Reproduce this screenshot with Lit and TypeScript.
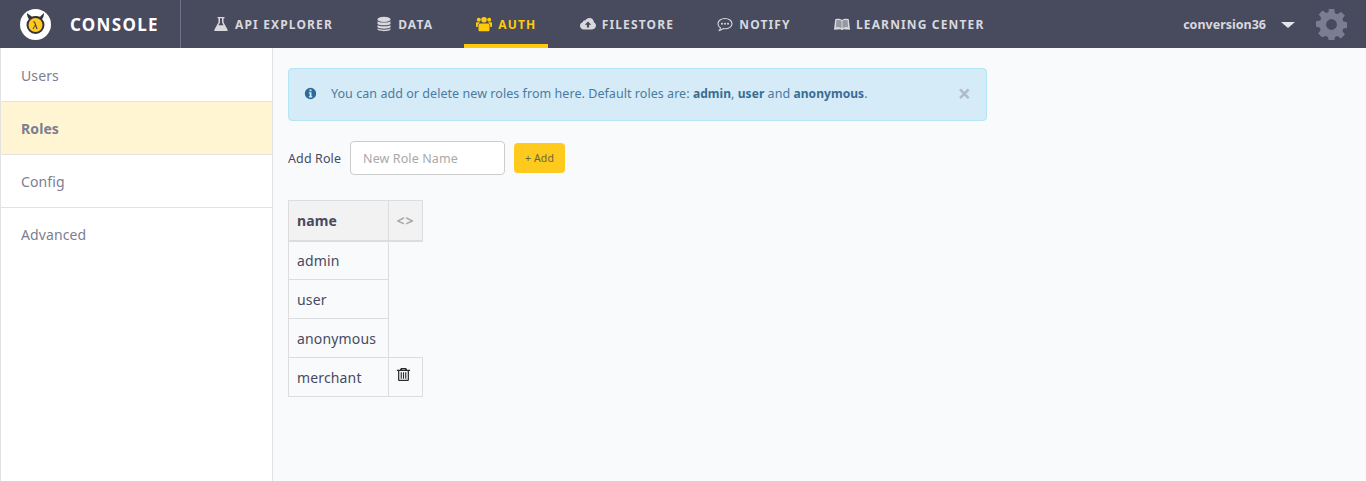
import { LitElement, css, html, svg } from "lit";
import { customElement } from "lit/decorators.js";

const icons = {
  flask: svg`<path fill-rule="evenodd" d="M4.500 1h7v1.300h-1v3.900l4 7.200c.5.900 0 1.600-.9 1.600H2.400c-.9 0-1.400-.7-.9-1.600l4-7.200V2.300h-1zM7 2.300v4.300L5.500 9.300h5L9 6.600V2.300z"/>`,
  database: svg`<ellipse cx="8" cy="3.400" rx="6.500" ry="2.600"/><path d="M1.500 5.200C2.500 7 13.500 7 14.500 5.200v2.600C13.500 9.800 2.500 9.800 1.500 7.800z"/><path d="M1.500 8.900C2.500 10.800 13.500 10.800 14.500 8.900v2.300C13.500 13.100 2.500 13.100 1.500 11.200z"/><path d="M1.500 12.300C2.500 14.200 13.500 14.200 14.500 12.300v1C14 15.800 2 15.800 1.500 13.300z"/>`,
  users: svg`<circle cx="8" cy="3.800" r="2.800"/><circle cx="2.800" cy="3.800" r="2"/><circle cx="13.200" cy="3.800" r="2"/><path d="M4.300 7.500h7.400c1.200 0 1.800 1 1.800 2.200v4.300c0 .8-.5 1.300-1.300 1.300H3.800c-.8 0-1.300-.5-1.300-1.300V9.700c0-1.200.6-2.200 1.800-2.200z"/><path d="M0 7.200C0 6.700.6 6.300 1.200 6.300h2.300c-.2.400 0 .8.300 1-1.300.3-2 1.400-2 2.900v.8H.8C.3 11 0 10.600 0 10.100z"/><path d="M16 7.200c0-.5-.6-.9-1.200-.9h-2.300c.2.400 0 .8-.3 1 1.300.3 2 1.400 2 2.900v.8h1c.5 0 .8-.4.800-.9z"/>`,
  cloud: svg`<path fill-rule="evenodd" d="M4 13.500C1.800 13.500 0 12 0 9.800 0 8 1.100 6.700 2.700 6.300 3 4.800 4.200 4 5.500 4.300 6.400 2.800 7.800 2 9.500 2c2.500 0 4.400 1.900 4.500 4.400 1.200.6 2 1.800 2 3.200 0 2.200-1.700 3.900-3.900 3.900zM8 5.500 4.800 8.700h2.100v2.900h2.200V8.700h2.100z"/>`,
  comment: svg`<path fill="none" stroke="currentColor" stroke-width="1.100" d="M8 2.500c3.900 0 7 2.300 7 5.200s-3.100 5.100-7 5.100c-.7 0-1.300 0-1.900-.2C5 13.600 3.800 14.200 2.300 14.500c.7-.8 1.100-1.700 1.100-2.700C1.900 10.900 1 9.400 1 7.700 1 4.800 4.100 2.500 8 2.500z"/><circle cx="5" cy="7.700" r="1"/><circle cx="8" cy="7.700" r="1"/><circle cx="11" cy="7.700" r="1"/>`,
  book: svg`<path fill-rule="evenodd" d="M0 13.800 1.200 3.300 2.200 3C4 2.500 6.500 2.700 8 4c1.500-1.300 4-1.500 5.800-1L14.800 3.300 16 13.800 9.500 13.300 8 14.200 6.500 13.300zM2.700 4.200 2.200 11.200c1.700-.4 3.500-.3 5.100.5V5.100C5.900 4 4.200 3.800 2.700 4.200zM13.300 4.200C11.800 3.800 10.100 4 8.700 5.100v6.600c1.600-.8 3.400-.9 5.100-.5z"/><path opacity=".55" d="M2.700 4.200 2.200 11.200c1.700-.4 3.500-.3 5.100.5V5.100C5.900 4 4.200 3.800 2.700 4.200zM13.300 4.200C11.800 3.800 10.100 4 8.700 5.100v6.600c1.600-.8 3.400-.9 5.100-.5z"/>`,
  info: svg`<path fill-rule="evenodd" d="M8 1a7 7 0 1 0 0 14A7 7 0 0 0 8 1zM6.800 3h2.400v2.200H6.800zM6 6.500h3.200v5H10.200V13H6V11.500h1V8H6z"/>`,
  trash: svg`<path fill-rule="evenodd" d="M5.200 1h5.600l1 2H15v1.300h-1.200v9.200c0 .9-.6 1.500-1.400 1.500H3.600c-.8 0-1.400-.6-1.400-1.500V4.300H1V3h3.200zM6.600 2.300l-.3.700h3.400l-.3-.7zM3.500 4.300v9.400h9V4.300zM5 5.700h1.200v6.700H5zM7.400 5.700h1.200v6.700H7.400zM9.800 5.700H11v6.700H9.800z"/>`,
  gear: svg`<path fill-rule="evenodd" d="M6.600 0h2.800l.4 2.200 1.300.5L12.900 1.400l2 2-1.300 1.800.5 1.300 2.200.4v2.800l-2.200.4-.5 1.300 1.300 1.800-2 2-1.800-1.300-1.300.5-.4 2.200H6.600l-.4-2.200-1.300-.5L3.100 14.600l-2-2 1.300-1.800-.5-1.300L0 9.100V6.300l2.200-.4.5-1.300L1.400 2.800l2-2 1.800 1.300 1.300-.5zM8 5.200a2.600 2.600 0 1 0 0 5.600 2.600 2.600 0 0 0 0-5.600z"/>`,
};

const nav = [
  { label: "API EXPLORER", icon: icons.flask },
  { label: "DATA", icon: icons.database },
  { label: "AUTH", icon: icons.users, active: true },
  { label: "FILESTORE", icon: icons.cloud },
  { label: "NOTIFY", icon: icons.comment },
  { label: "LEARNING CENTER", icon: icons.book },
];

const sideItems = ["Users", "Roles", "Config", "Advanced"];
const roles = ["admin", "user", "anonymous", "merchant"];

@customElement("app-root")
export class AppRoot extends LitElement {
  static styles = css`
    :host {
      display: block;
      height: 481px;
      overflow: hidden;
      background: #f9fafc;
      color: #484a5e;
      font-family: "Noto Sans", "Open Sans", sans-serif;
    }

    svg {
      display: block;
      fill: currentColor;
    }

    .header {
      display: flex;
      align-items: stretch;
      height: 48px;
      background: #484a5e;
    }

    .brand {
      display: flex;
      align-items: center;
      width: 181px;
      padding-left: 20px;
      box-sizing: border-box;
      border-right: 1px solid #6f7188;
      color: #fff;
    }

    .brand span {
      margin-left: 19px;
      font-size: 17px;
      font-weight: 700;
      letter-spacing: 1.3px;
    }

    .nav {
      display: flex;
      flex: 1;
      padding-left: 20px;
    }

    .nav-item {
      display: flex;
      align-items: center;
      gap: 6px;
      padding: 4px 12px 0;
      margin-right: 19.200px;
      box-sizing: border-box;
      border-bottom: 4px solid transparent;
      color: #d8d8dd;
      font-size: 12px;
      font-weight: 700;
      letter-spacing: 1.150px;
    }

    .nav-item.active {
      color: #ffca0a;
      border-bottom-color: #ffca0a;
    }

    .account {
      display: flex;
      align-items: center;
      padding-right: 19px;
      color: #d8d8dd;
      font-size: 12.500px;
      font-weight: 700;
    }

    .caret {
      width: 0;
      height: 0;
      margin: 2px 21px 0 15px;
      border-left: 7px solid transparent;
      border-right: 7px solid transparent;
      border-top: 6px solid #e6e6ea;
    }

    .gear {
      color: #7b7d93;
    }

    .body {
      display: flex;
      height: 433px;
    }

    .sidebar {
      width: 273px;
      box-sizing: border-box;
      padding-top: 1px;
      background: #fff;
      border-left: 1px solid #e2e2e2;
      border-right: 1px solid #e2e2e2;
      flex: none;
    }

    .side-item {
      display: flex;
      align-items: center;
      height: 53px;
      padding-left: 20px;
      box-sizing: border-box;
      border-bottom: 1px solid #e2e2e2;
      color: #7c7e92;
      font-size: 14px;
      letter-spacing: 0.1px;
    }

    .side-item.active {
      background: #fff5d2;
      font-weight: 700;
    }

    .side-item:last-child {
      border-bottom: none;
    }

    .main {
      flex: 1;
      padding: 20px 15px;
    }

    .alert {
      display: flex;
      align-items: center;
      width: 699px;
      height: 53px;
      box-sizing: border-box;
      padding: 0 15px 2px;
      background: #d5ebf8;
      border: 1px solid #b1e6f2;
      border-radius: 4px;
      color: #4a7ba0;
      font-size: 12.500px;
      letter-spacing: 0.05px;
    }

    .alert .info {
      color: #2d6a97;
      margin-right: 14px;
    }

    .alert b {
      color: #3a6d92;
      font-size: 12px;
    }

    .alert .text {
      flex: 1;
    }

    .close {
      color: #aebcc6;
      font-size: 23px;
      font-weight: 700;
      line-height: 1;
    }

    .form {
      display: flex;
      align-items: center;
      margin-top: 20px;
      font-size: 12.500px;
      letter-spacing: 0.1px;
    }

    .form label {
      margin-right: 9px;
      color: #484a5e;
    }

    .input {
      display: flex;
      align-items: center;
      width: 155px;
      height: 34px;
      box-sizing: border-box;
      padding-left: 12px;
      background: #fff;
      border: 1px solid #ccc;
      border-radius: 4px;
      color: #a9a9a9;
    }

    .add {
      display: flex;
      align-items: center;
      justify-content: center;
      width: 51px;
      height: 30px;
      margin-left: 9px;
      background: #ffca1e;
      border-radius: 4px;
      color: #6b6440;
      font-size: 10.500px;
    }

    table {
      margin-top: 25px;
      border-collapse: collapse;
      color: #484a5e;
      font-size: 14px;
      letter-spacing: 0.150px;
    }

    td,
    th {
      box-sizing: border-box;
      height: 39px;
      padding: 0 8px;
      border: 1px solid #ddd;
      text-align: left;
      font-weight: 400;
    }

    th {
      height: 40px;
      background: #f2f2f2;
      border-bottom-width: 2px;
      font-weight: 700;
    }

    .name {
      width: 100px;
    }

    .toggle {
      width: 34px;
      padding: 0;
      text-align: center;
      color: #a8a8a8;
      font-size: 14px;
      letter-spacing: 1px;
      font-weight: 700;
    }

    .empty {
      border: none;
    }

    .del {
      padding: 0 0 5px 7px;
      color: #2b2b2b;
    }
  `;

  render() {
    return html`
      <div class="header">
        <div class="brand">
          <svg width="31" height="31" viewBox="0 0 31 31">
            <circle cx="15.500" cy="15.500" r="15.500" fill="#fff" />
            <path d="M7 4c0 3 .8 5 2.300 6.400 3.500-2.400 8.900-2.400 12.400 0C23.200 9 24 7 24 4l-4 3.800c-2.800-.8-5.200-.8-8 0z" fill="#35323a" />
            <circle cx="15.500" cy="16" r="8" fill="#ffca1e" stroke="#35323a" stroke-width="2" />
            <path d="M12.600 20l2.400-4.500-.9-2.200h-1v-.9h1.800l2.700 7.600h-1.200l-1.300-3.500-1.500 3.500z" fill="#35323a" />
          </svg>
          <span>CONSOLE</span>
        </div>
        <div class="nav">
          ${nav.map(
            (n) => html`<div class="nav-item ${n.active ? "active" : ""}">
              <svg width="16" height="16" viewBox="0 0 16 16">${n.icon}</svg>
              ${n.label}
            </div>`,
          )}
        </div>
        <div class="account">
          conversion36
          <div class="caret"></div>
          <svg class="gear" width="31" height="31" viewBox="0 0 16 16">${icons.gear}</svg>
        </div>
      </div>
      <div class="body">
        <div class="sidebar">
          ${sideItems.map(
            (s) => html`<div class="side-item ${s === "Roles" ? "active" : ""}">${s}</div>`,
          )}
        </div>
        <div class="main">
          <div class="alert">
            <svg class="info" width="13" height="13" viewBox="0 0 16 16">${icons.info}</svg>
            <div class="text">
              You can add or delete new roles from here. Default roles are:
              <b>admin</b>, <b>user</b> and <b>anonymous</b>.
            </div>
            <div class="close">×</div>
          </div>
          <div class="form">
            <label>Add Role</label>
            <div class="input">New Role Name</div>
            <div class="add">+ Add</div>
          </div>
          <table>
            <tr>
              <th class="name">name</th>
              <th class="toggle">&lt;&gt;</th>
            </tr>
            ${roles.map(
              (r) => html`<tr>
                <td class="name">${r}</td>
                ${r === "merchant"
                  ? html`<td class="del"><svg width="15" height="15" viewBox="0 0 16 16">${icons.trash}</svg></td>`
                  : html`<td class="empty"></td>`}
              </tr>`,
            )}
          </table>
        </div>
      </div>
    `;
  }
}
